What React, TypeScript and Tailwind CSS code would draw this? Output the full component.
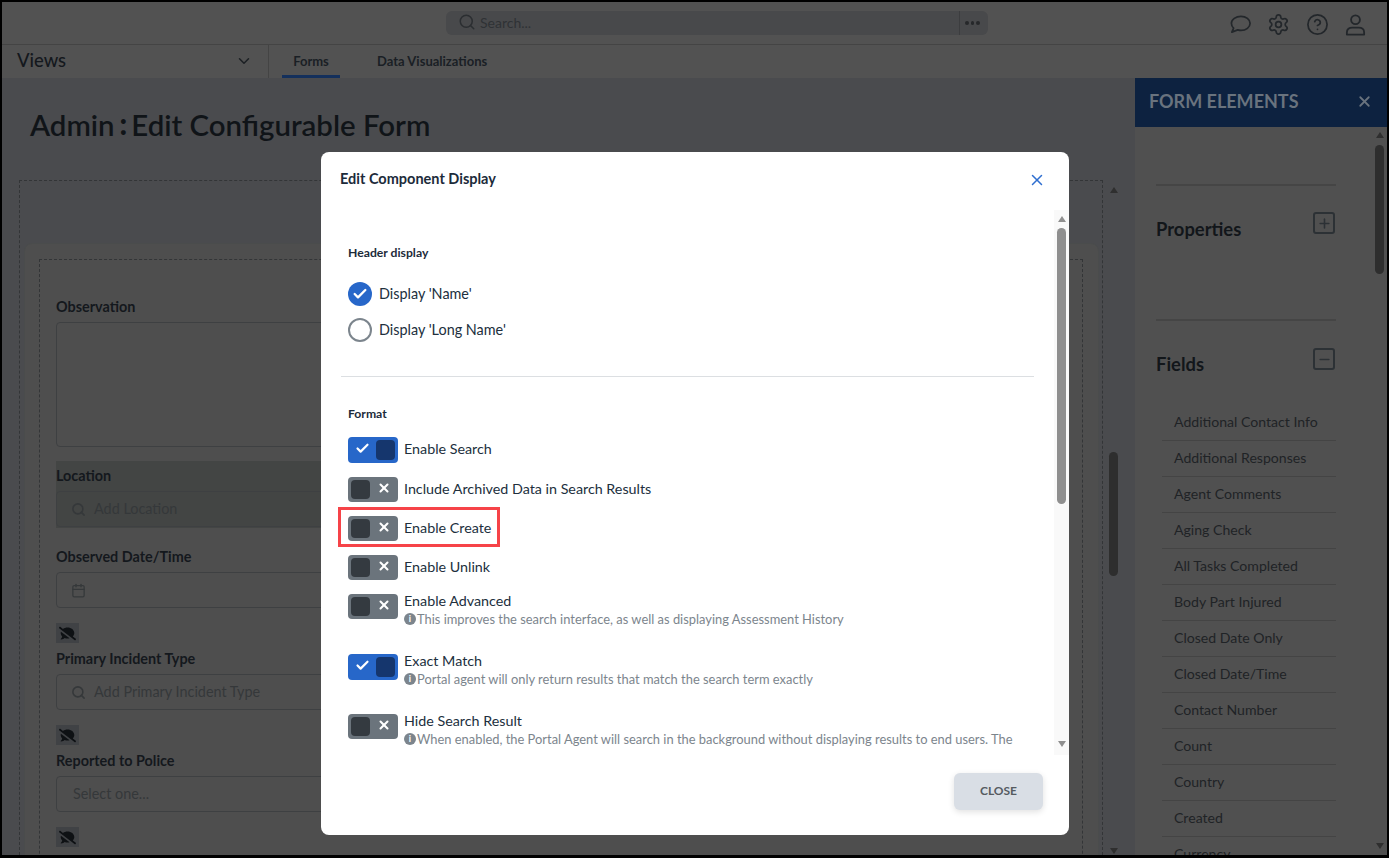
import React from "react";
import { Search, ChevronDown, X, Check, Settings, CircleHelp, Plus, Minus, Calendar } from "lucide-react";
import { FaCommentSlash } from "react-icons/fa";

const fieldItems = [
  "Additional Contact Info","Additional Responses","Agent Comments","Aging Check","All Tasks Completed","Body Part Injured",
  "Closed Date Only","Closed Date/Time","Contact Number","Count","Country","Created","Currency",
];

function ArrowUp({ c = "border-b-[#2f2f2f]" }: { c?: string }) {
  return <div className={`h-0 w-0 border-x-[4.5px] border-b-[6px] border-x-transparent ${c}`} />;
}
function ArrowDown({ c = "border-t-[#2f2f2f]" }: { c?: string }) {
  return <div className={`h-0 w-0 border-x-[4.5px] border-t-[6px] border-x-transparent ${c}`} />;
}

function Toggle({ on }: { on?: boolean }) {
  return on ? (
    <div className="flex h-[26px] w-[50px] shrink-0 items-center justify-between rounded-[4px] bg-[#2767c9] pl-[7px] pr-[3px]">
      <Check size={15} strokeWidth={3.5} className="-mt-[3px] text-white" />
      <div className="h-[20px] w-[19px] rounded-[4px] bg-[#15366d]" />
    </div>
  ) : (
    <div className="flex h-[25px] w-[50px] shrink-0 items-center justify-between rounded-[4px] bg-[#6b747c] pl-[3px] pr-[7px]">
      <div className="h-[19px] w-[19px] rounded-[4px] bg-[#343a40]" />
      <X size={14} strokeWidth={3.5} className="-mt-[3px] text-white" />
    </div>
  );
}

function Row({ on, label, desc, h, box }: { on?: boolean; label: string; desc?: string; h: string; box?: boolean }) {
  return (
    <div className={`relative flex gap-[6px] ${h}`}>
      <Toggle on={on} />
      <div className="min-w-0">
        <div className={desc ? "text-[14.3px] leading-[13px] text-[#212f3d]" : "text-[14.3px] leading-[24px] text-[#212f3d]"}>{label}</div>
        {desc && (
          <div className="mt-[4px] flex items-center whitespace-nowrap text-[12.9px] leading-[16px] text-[#7c858d]">
            <span className="mr-[1px] flex h-[12px] w-[12px] items-center justify-center rounded-full bg-[#7c858d] text-[9px] font-bold text-white">i</span>
            {desc}
          </div>
        )}
      </div>
      {box && <div className="absolute left-[-10px] top-[-9px] h-[40px] w-[162px] border-[3px] border-[#f64348]" />}
    </div>
  );
}

function Modal() {
  return (
    <div className="absolute left-[319px] top-[150px] flex h-[683px] w-[748px] flex-col rounded-lg bg-white">
      <div className="flex h-[58px] shrink-0 items-start justify-between pl-[19px] pr-[23px] pt-[18px]">
        <div className="text-[14.5px] font-bold leading-[18px] text-[#1c2b3a]">Edit Component Display</div>
        <X size={18} strokeWidth={2} className="mt-[1px] text-[#2f6fd0]" />
      </div>
      <div className="flex h-[545px] shrink-0 overflow-hidden">
        <div className="w-[733px] overflow-hidden pl-[20px] pr-[20px]">
          <div className="pl-[7px] pt-[36px]">
            <div className="text-[12.2px] font-bold leading-[14px] text-[#1c2b3a]">Header display</div>
            <div className="mt-[22px] flex h-[24px] items-center gap-[7px]">
              <div className="flex h-[24px] w-[24px] items-center justify-center rounded-full bg-[#2767c9]">
                <Check size={16} strokeWidth={3.5} className="text-white" />
              </div>
              <span className="text-[14.4px] text-[#212f3d]">Display 'Name'</span>
            </div>
            <div className="mt-[12px] flex h-[24px] items-center gap-[7px]">
              <div className="h-[24px] w-[24px] rounded-full border-2 border-[#7c858d]" />
              <span className="text-[14.4px] text-[#212f3d]">Display 'Long Name'</span>
            </div>
          </div>
          <div className="mt-[34px] h-px w-[693px] bg-[#dcdfe2]" />
          <div className="pl-[7px] pt-[30px]">
            <div className="text-[12.2px] font-bold leading-[14px] text-[#1c2b3a]">Format</div>
            <div className="mt-[16px]">
              <Row on label="Enable Search" h="h-[40px]" />
              <Row label="Include Archived Data in Search Results" h="h-[39px]" />
              <Row label="Enable Create" h="h-[39px]" box />
              <Row label="Enable Unlink" h="h-[39px]" />
              <Row label="Enable Advanced" desc="This improves the search interface, as well as displaying Assessment History" h="h-[60px]" />
              <Row on label="Exact Match" desc="Portal agent will only return results that match the search term exactly" h="h-[60px]" />
              <Row label="Hide Search Result" desc="When enabled, the Portal Agent will search in the background without displaying results to end users. The" h="h-[36px]" />
            </div>
          </div>
        </div>
        <div className="flex w-[15px] flex-col items-center justify-between bg-[#f9f9f9] pb-[8px] pt-[6px]">
          <div className="flex flex-col items-center gap-[6px]">
            <ArrowUp c="border-b-[#8f8f8f]" />
            <div className="h-[276px] w-[9px] rounded-full bg-[#8f8f8f]" />
          </div>
          <ArrowDown c="border-t-[#8f8f8f]" />
        </div>
      </div>
      <div className="flex flex-1 justify-end pr-[26px] pt-[18px]">
        <div className="flex h-[37px] w-[89px] items-center justify-center rounded-md bg-[#d9dee5] pb-[1px] text-[12px] font-bold text-[#555b61] shadow-[0_2px_6px_rgba(0,0,0,0.12)]">CLOSE</div>
      </div>
    </div>
  );
}

function Label({ children }: { children: React.ReactNode }) {
  return <div className="h-[20px] pt-[1px] text-[14.4px] font-bold leading-[20px] text-[#14181d]">{children}</div>;
}
function InputBox({ children }: { children?: React.ReactNode }) {
  return <div className="mt-[6px] flex h-[36px] items-center rounded-[4px] border border-[#3e4042] text-[14.4px] text-[#35383a]">{children}</div>;
}
function SlashBox() {
  return (
    <div className="mb-[5px] mt-[15px] flex h-[20px] w-[23px] items-center justify-center bg-[#404245]">
      <FaCommentSlash size={17} className="text-[#0e1114]" />
    </div>
  );
}

function Form() {
  return (
    <div className="flex min-h-0 flex-1 overflow-hidden">
      <div className="ml-[17px] w-[1084px] border-l border-r border-t border-dashed border-[#333537] pl-[4px] pr-[3px] pt-[62px]">
        <div className="h-[700px] rounded-lg border border-[#4a4c4c] bg-[#4e4e4e] pl-[14px] pr-[15px] pt-[15px]">
          <div className="h-[700px] border-l border-r border-t border-dashed border-[#333537] pl-[16px] pr-[16px] pt-[36px]">
            <Label>Observation</Label>
            <div className="mt-[6px] h-[125px] rounded-[4px] border border-[#3e4042]" />
            <div className="mt-[14px] h-[67px] bg-[#434544] pt-[4px]">
              <Label>Location</Label>
              <InputBox>
                <Search size={15} strokeWidth={2.5} className="ml-[14px] mr-[8px] text-[#35383a]" />
                Add Location
              </InputBox>
            </div>
            <div className="mt-[18px]">
              <Label>Observed Date/Time</Label>
              <InputBox>
                <Calendar size={15} className="ml-[14px] text-[#35383a]" />
              </InputBox>
              <SlashBox />
              <Label>Primary Incident Type</Label>
              <InputBox>
                <Search size={15} strokeWidth={2.5} className="ml-[14px] mr-[8px] text-[#35383a]" />
                Add Primary Incident Type
              </InputBox>
              <SlashBox />
              <Label>Reported to Police</Label>
              <InputBox>
                <span className="ml-[16px]">Select one...</span>
              </InputBox>
              <SlashBox />
            </div>
          </div>
        </div>
      </div>
      <div className="ml-[6px] flex w-[9px] flex-col items-center pb-[1px] pt-[7px]">
        <ArrowUp />
        <div className="mt-[259px] h-[124px] w-[9px] rounded-full bg-[#2e2e2e]" />
        <div className="mt-auto">
          <ArrowDown />
        </div>
      </div>
    </div>
  );
}

function FormElements() {
  return (
    <div className="flex w-[252px] shrink-0 flex-col">
      <div className="flex h-[49px] shrink-0 items-center justify-between bg-[#0d2240] pb-[2px] pl-[14px] pr-[14px]">
        <span className="text-[18px] font-bold text-[#69737e]">FORM ELEMENTS</span>
        <X size={17} strokeWidth={2.5} className="text-[#69737e]" />
      </div>
      <div className="flex min-h-0 flex-1 bg-[#505050]">
        <div className="w-[240px] overflow-hidden pl-[21px] pt-[57px]">
          <div className="w-[180px]">
            <div className="h-[2px] bg-[#454545]" />
            <div className="flex h-[133px] items-start justify-between pr-[1px] pt-[26px]">
              <span className="mt-[4px] text-[18.4px] font-bold leading-[26px] text-[#12161a]">Properties</span>
              <div className="flex h-[22px] w-[22px] items-center justify-center rounded-[3px] border-2 border-[#2c3135]">
                <Plus size={15} strokeWidth={2.5} className="text-[#2c3135]" />
              </div>
            </div>
            <div className="h-[2px] bg-[#454545]" />
            <div className="flex h-[84px] items-start justify-between pr-[1px] pt-[27px]">
              <span className="mt-[3px] text-[18.4px] font-bold leading-[26px] text-[#12161a]">Fields</span>
              <div className="flex h-[22px] w-[22px] items-center justify-center rounded-[3px] border-2 border-[#2c3135]">
                <Minus size={15} strokeWidth={2.5} className="text-[#2c3135]" />
              </div>
            </div>
            <div className="ml-[6px]">
              {fieldItems.map((f) => (
                <div key={f} className="flex h-[36px] items-center border-b border-[#444444] pb-[2px] pl-[12px] text-[14.1px] text-[#202326]">{f}</div>
              ))}
            </div>
          </div>
        </div>
        <div className="flex w-[9px] flex-col items-center justify-between pb-[6px] pt-[5px]">
          <div className="flex flex-col items-center gap-[7px]">
            <ArrowUp />
            <div className="h-[129px] w-[9px] rounded-full bg-[#2e2e2e]" />
          </div>
          <ArrowDown />
        </div>
      </div>
    </div>
  );
}

export default function App() {
  return (
    <div className="relative flex h-[858px] w-full flex-col overflow-hidden border-b-[3px] border-l-2 border-r-2 border-t-2 border-black bg-[#4a4b4e] font-['Lato','Noto_Sans',sans-serif]">
      <div className="flex h-[43px] shrink-0 items-start justify-between border-b border-[#444444] bg-[#525252] pr-[20px]">
        <div className="ml-[444px] mt-[9px] flex h-[24px] w-[542px] items-center justify-between rounded-md bg-[#48494b]">
          <div className="flex items-center gap-[4px] pb-[2px] pl-[12px] text-[14px] text-[#2f3235]">
            <Search size={18} strokeWidth={2} className="text-[#2b2e31]" />
            Search...
          </div>
          <div className="flex h-[24px] w-[29px] items-center justify-center gap-[2px] border-l border-[#3c3d3f] pr-[3px]">
            <span className="h-[3.5px] w-[3.5px] rounded-full bg-[#26282a]" />
            <span className="h-[3.5px] w-[3.5px] rounded-full bg-[#26282a]" />
            <span className="h-[3.5px] w-[3.5px] rounded-full bg-[#26282a]" />
          </div>
        </div>
        <div className="mt-[11px] flex items-center text-[#23272b]">
          <svg width="23" height="23" viewBox="0 0 24 24" fill="none" stroke="currentColor" strokeWidth="1.8" strokeLinejoin="round">
            <path d="M12.5 3.5c5.3 0 9.5 3.2 9.5 7.3s-4.2 7.3-9.500 7.300c-1.200 0-2.400-.2-3.400-.5L3 20l1.800-4.200C3.300 14.500 2.500 12.700 2.500 10.800c0-4.100 4.700-7.300 10-7.300z" />
          </svg>
          <Settings size={23} strokeWidth={1.8} className="ml-[15px]" />
          <CircleHelp size={23} strokeWidth={1.8} className="ml-[16px]" />
          <svg className="ml-[15px]" width="23" height="23" viewBox="0 0 24 24" fill="none" stroke="currentColor" strokeWidth="1.9" strokeLinejoin="round">
            <circle cx="12" cy="7" r="4.6" />
            <path d="M3 22.500v-2.500c0-3 2.500-4.800 5.500-4.800h7c3 0 5.500 1.800 5.500 4.800v2.500z" />
          </svg>
        </div>
      </div>
      <div className="flex h-[33px] shrink-0 items-stretch bg-[#525252]">
        <div className="flex w-[267px] shrink-0 items-center justify-between border-r border-[#444444] pb-[2px] pl-[15px] pr-[15px]">
          <span className="text-[18.4px] font-medium text-[#14181d]">Views</span>
          <ChevronDown size={18} strokeWidth={2} className="text-[#1c2024]" />
        </div>
        <div className="ml-[13px] flex w-[58px] items-center justify-center border-b-[3px] border-[#14305c] pt-[3px] text-[13px] font-bold text-[#1a1f25]">Forms</div>
        <div className="ml-[37px] flex items-center pt-[1px] text-[13px] font-bold text-[#1a1f25]">Data Visualizations</div>
      </div>
      <div className="flex min-h-0 flex-1">
        <div className="flex w-[1133px] shrink-0 flex-col">
          <div className="flex h-[102px] shrink-0 items-start pl-[28px] pt-[27px]">
            <div className="flex items-center text-[29.4px] font-semibold leading-[40px] text-[#101418]">
              Admin<span className="ml-[5px] mr-[4px] -mt-[3px] font-black">:</span>Edit Configurable Form
            </div>
          </div>
          <Form />
        </div>
        <FormElements />
      </div>
      <Modal />
    </div>
  );
}
